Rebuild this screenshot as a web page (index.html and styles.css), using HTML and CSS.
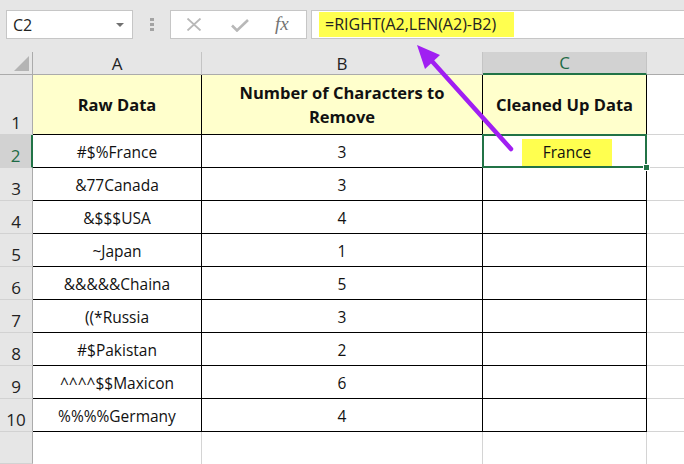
FILE: index.html
```html
<!DOCTYPE html>
<html>
<head>
<meta charset="utf-8">
<link rel="stylesheet" href="styles.css">
</head>
<body>
<div class="app">
  <div class="toolbar">
    <div class="namebox"><span class="nb-text">C2</span><span class="caret"></span></div>
    <div class="grip"><i></i><i></i><i></i></div>
    <div class="fxbox">
      <svg class="ico-x" width="16" height="13" viewBox="0 0 16 13"><path d="M1.5 0.5 L14.5 12.5 M14.5 0.5 L1.5 12.5" stroke="#b8b8b8" stroke-width="1.8" fill="none"/></svg>
      <svg class="ico-check" width="18" height="13" viewBox="0 0 18 13"><path d="M1 6.5 L6 11.5 L17 1" stroke="#b8b8b8" stroke-width="2.6" fill="none"/></svg>
      <span class="fx">fx</span>
    </div>
    <div class="formula"><span class="hl">=RIGHT(A2,LEN(A2)-B2)</span></div>
  </div>

  <div class="sheet">
    <div class="corner"><span class="tri"></span></div>
    <div class="ch">A</div>
    <div class="ch">B</div>
    <div class="ch sel">C</div>
    <div class="ch last"></div>

    <div class="rh">1</div>
    <div class="c t head">Raw Data</div>
    <div class="c t head">Number of Characters to<br>Remove</div>
    <div class="c t head">Cleaned Up Data</div>
    <div class="c g"></div>

    <div class="rh sel">2</div>
    <div class="c t">#$%France</div>
    <div class="c t">3</div>
    <div class="c t active"><span class="hlc">France</span><span class="selbox"></span><span class="handle"></span></div>
    <div class="c g"></div>

    <div class="rh">3</div>
    <div class="c t">&amp;77Canada</div>
    <div class="c t">3</div>
    <div class="c t"></div>
    <div class="c g"></div>

    <div class="rh">4</div>
    <div class="c t">&amp;$$$USA</div>
    <div class="c t">4</div>
    <div class="c t"></div>
    <div class="c g"></div>

    <div class="rh">5</div>
    <div class="c t">~Japan</div>
    <div class="c t">1</div>
    <div class="c t"></div>
    <div class="c g"></div>

    <div class="rh">6</div>
    <div class="c t">&amp;&amp;&amp;&amp;&amp;Chaina</div>
    <div class="c t">5</div>
    <div class="c t"></div>
    <div class="c g"></div>

    <div class="rh">7</div>
    <div class="c t">((*Russia</div>
    <div class="c t">3</div>
    <div class="c t"></div>
    <div class="c g"></div>

    <div class="rh">8</div>
    <div class="c t">#$Pakistan</div>
    <div class="c t">2</div>
    <div class="c t"></div>
    <div class="c g"></div>

    <div class="rh">9</div>
    <div class="c t">^^^^$$Maxicon</div>
    <div class="c t">6</div>
    <div class="c t"></div>
    <div class="c g"></div>

    <div class="rh">10</div>
    <div class="c t">%%%%Germany</div>
    <div class="c t">4</div>
    <div class="c t"></div>
    <div class="c g"></div>

    <div class="rh"></div>
    <div class="c e"></div>
    <div class="c e"></div>
    <div class="c e"></div>
    <div class="c e last"></div>
  </div>

  <svg class="arrow" width="684" height="464" viewBox="0 0 684 464">
    <line x1="511" y1="149" x2="430" y2="59" stroke="#a01ff2" stroke-width="4.5" stroke-linecap="round"/>
    <polygon points="417,45 440,55 425,69" fill="#a01ff2"/>
  </svg>
</div>
</body>
</html>
```

FILE: styles.css
```css
* { box-sizing: border-box; }
html, body { margin: 0; padding: 0; }
body {
  width: 684px;
  height: 464px;
  overflow: hidden;
  background: #ffffff;
  font-family: "Open Sans", "DejaVu Sans", sans-serif;
}
.app {
  position: relative;
  width: 684px;
  height: 464px;
  display: flex;
  flex-direction: column;
}

/* ---------- toolbar ---------- */
.toolbar {
  height: 52px;
  flex: none;
  background: #e6e6e6;
  display: flex;
  align-items: flex-start;
  padding-top: 10px;
  padding-left: 6px;
}
.namebox {
  width: 127px;
  height: 29px;
  background: #fff;
  border: 1px solid #c6c6c6;
  display: flex;
  align-items: center;
  justify-content: space-between;
  padding: 0 8px 0 6px;
}
.nb-text {
  font-size: 16px;
  color: #222;
  line-height: 1;
}
.caret {
  width: 0;
  height: 0;
  border-left: 4px solid transparent;
  border-right: 4px solid transparent;
  border-top: 4px solid #707070;
  margin-top: 1px;
}
.grip {
  width: 37px;
  height: 29px;
  display: flex;
  flex-direction: column;
  align-items: center;
  justify-content: center;
  gap: 2px;
}
.grip i {
  display: block;
  width: 4px;
  height: 3px;
  background: #a3a3a3;
}
.fxbox {
  width: 137px;
  height: 29px;
  background: #fff;
  border: 1px solid #c6c6c6;
  display: flex;
  align-items: center;
  padding-left: 15px;
}
.ico-x { margin-right: 29px; }
.ico-check { margin-right: 26px; margin-top: 1px; }
.fx {
  font-family: "Liberation Serif", "DejaVu Serif", serif;
  font-style: italic;
  font-size: 19px;
  color: #737373;
  line-height: 1;
  margin-top: -2px;
}
.formula {
  flex: 1;
  height: 29px;
  margin-left: 4px;
  background: #fff;
  border: 1px solid #c6c6c6;
  border-right: none;
  padding: 1px 0 0 7px;
}
.hl {
  display: inline-block;
  height: 25px;
  line-height: 25px;
  background: #ffff4f;
  padding: 0 18px 0 6px;
  font-size: 16px;
  color: #222;
}

/* ---------- sheet ---------- */
.sheet {
  flex: 1;
  display: grid;
  grid-template-columns: 33px 169px 281px 164px 1fr;
  grid-template-rows: 23px 60px repeat(9, 33px) 1fr;
  background: #fff;
}
.corner {
  background: #e6e6e6;
  border-right: 1px solid #ababab;
  border-bottom: 1px solid #ababab;
  position: relative;
}
.tri {
  position: absolute;
  right: 3px;
  bottom: 3px;
  width: 0;
  height: 0;
  border-left: 15px solid transparent;
  border-bottom: 15px solid #b4b4b4;
}
.ch {
  background: #e6e6e6;
  border-right: 1px solid #c4c4c4;
  border-bottom: 1px solid #ababab;
  display: flex;
  align-items: center;
  justify-content: center;
  font-size: 17px;
  color: #222;
  line-height: 1;
}
.ch.last { border-right: none; }
.ch.sel {
  background: #d2d2d2;
  border-bottom: 2px solid #217346;
  color: #1e6b46;
}
.rh {
  background: #e6e6e6;
  border-right: 1px solid #ababab;
  border-bottom: 1px solid #d2d2d2;
  display: flex;
  align-items: flex-end;
  justify-content: center;
  padding-bottom: 3px;
  font-size: 17px;
  color: #222;
  line-height: 1;
}
.rh.sel {
  background: #d2d2d2;
  border-right: 2px solid #217346;
  color: #1e6b46;
}
.c {
  display: flex;
  align-items: center;
  justify-content: center;
  text-align: center;
  font-size: 15.5px;
  color: #111;
  line-height: 22px;
  padding-top: 2px;
}
.c.t {
  border-right: 1px solid #000;
  border-bottom: 1px solid #000;
}
.c.head {
  background: #ffffcc;
  font-weight: 700;
  font-size: 16.5px;
  line-height: 24px;
  padding-top: 0;
}
.c.g {
  border-bottom: 1px solid #d4d4d4;
}
.c.e {
  border-right: 1px solid #d4d4d4;
}
.c.e.last { border-right: none; }
.active { position: relative; }
.hlc {
  display: inline-block;
  width: 90px;
  height: 27px;
  line-height: 27px;
  background: #ffff4f;
  margin-left: 5px;
}
.selbox {
  position: absolute;
  left: -1px;
  top: -1px;
  right: -1px;
  bottom: -1px;
  border: 2px solid #217346;
}
.handle {
  position: absolute;
  right: -4px;
  bottom: -4px;
  width: 7px;
  height: 7px;
  background: #217346;
  border: 1px solid #fff;
}

/* ---------- arrow overlay ---------- */
.arrow {
  position: absolute;
  left: 0;
  top: 0;
  pointer-events: none;
}
```
